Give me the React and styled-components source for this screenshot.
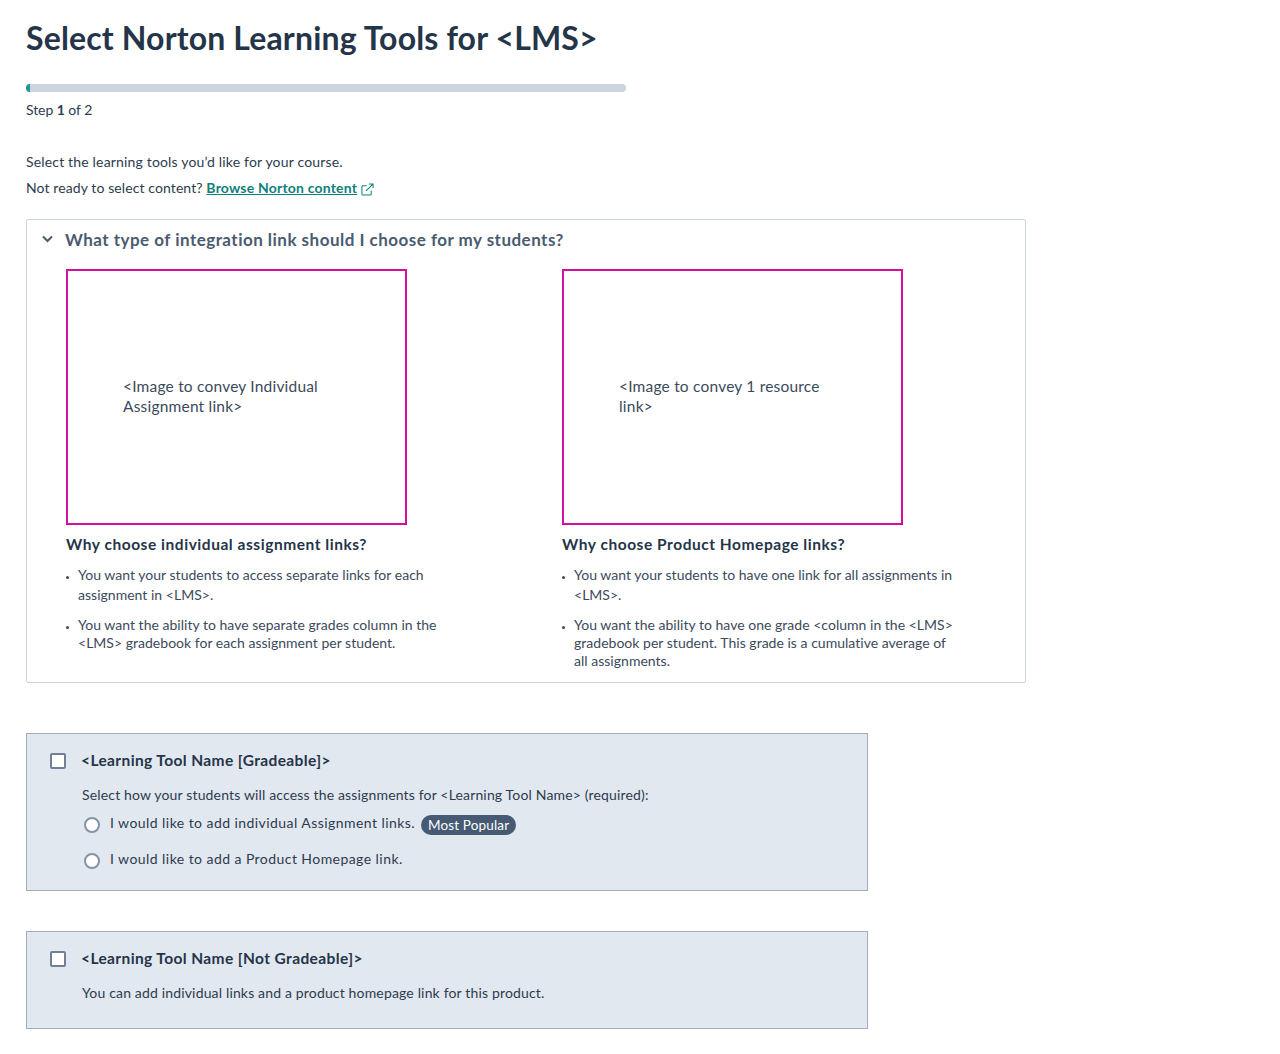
import React from 'react';
import styled, { createGlobalStyle } from 'styled-components';

const GlobalStyle = createGlobalStyle`
  body {
    margin: 0;
    background: #fff;
    color: #2c3e50;
    font-family: Lato, "Open Sans", sans-serif;
  }
`;

const Page = styled.main`
  padding: 18px 26px 25px;
  width: 1000px;
`;

const Title = styled.h1`
  margin: 0;
  font-size: 32px;
  line-height: 40px;
  font-weight: 700;
  color: #253549;
  letter-spacing: 0.15px;
`;

const Track = styled.div`
  margin-top: 26px;
  width: 600px;
  height: 8px;
  border-radius: 4px;
  background: #cbd5e0;
  overflow: hidden;
`;

const Fill = styled.div`
  height: 100%;
  background: #1d9a94;
`;

const Step = styled.p`
  margin: 8px 0 0;
  font-size: 14px;
  line-height: 20px;
  color: #2d3b4e;
  letter-spacing: -0.07px;

  strong {
    font-weight: 700;
  }
`;

const Intro = styled.p`
  margin: ${p => p.$top}px 0 0;
  font-size: 14px;
  line-height: 20px;
  color: #2d3b4e;
  letter-spacing: ${p => p.$tracking}px;
`;

const BrowseLink = styled.a`
  color: #0f7f7a;
  font-weight: 700;
  text-decoration: underline;
  letter-spacing: 0.2px;
`;

const ExternalIcon = styled.svg`
  width: 13px;
  height: 13px;
  margin-left: 4px;
  vertical-align: -3px;
  fill: none;
  stroke: #0f7f7a;
  stroke-width: 1.1;
`;

const Accordion = styled.section`
  margin-top: 21px;
  width: 1000px;
  height: 464px;
  box-sizing: border-box;
  border: 1px solid #cbd5e0;
  border-radius: 2px;
`;

const AccordionHead = styled.div`
  display: flex;
  align-items: center;
  height: 38px;
  padding: 0 0 0 15px;
  gap: 12px;
  font-size: 17px;
  font-weight: 700;
  color: #4a5b70;
  letter-spacing: 0.48px;
`;

const Chevron = styled.svg`
  width: 11px;
  height: 8px;
  fill: none;
  stroke: #4a5b70;
  stroke-width: 2;
`;

const Columns = styled.div`
  display: grid;
  grid-template-columns: 496px 1fr;
  padding: 11px 0 0 39px;
`;

const Placeholder = styled.div`
  box-sizing: border-box;
  width: 341px;
  height: 256px;
  border: 2px solid #d3109c;
  padding: 105px 70px 0 55px;
  font-size: 15.5px;
  line-height: 20px;
  color: #3c4a5c;
  letter-spacing: 0.2px;
`;

const ColumnTitle = styled.h3`
  margin: 9px 0 0;
  font-size: 15.5px;
  line-height: 20px;
  font-weight: 700;
  color: #253549;
  letter-spacing: 0.54px;
`;

const Bullets = styled.ul`
  margin: 11px 0 0;
  padding: 0 0 0 12px;
  width: 380px;
  font-size: 14px;
  color: #3c4a5c;
  letter-spacing: 0.02px;
`;

const Bullet = styled.li`
  margin-bottom: 11px;
  line-height: ${p => p.$line}px;

  &::marker {
    font-size: 8px;
  }
`;

const ToolCard = styled.section`
  margin-top: ${p => p.$top}px;
  width: 842px;
  height: ${p => p.$height}px;
  box-sizing: border-box;
  padding: 16px 23px 0;
  background: #e2e8f0;
  border: 1px solid #a0aec0;
`;

const ToolHead = styled.div`
  display: flex;
  align-items: center;
  gap: 15px;
  height: 20px;
  font-size: 15.5px;
  font-weight: 700;
  color: #253549;
  letter-spacing: 0.39px;
`;

const Checkbox = styled.span`
  box-sizing: border-box;
  width: 16px;
  height: 16px;
  margin-top: 2px;
  background: #fff;
  border: 2px solid #718096;
  border-radius: 2px;
`;

const ToolText = styled.p`
  margin: 15px 0 0 32px;
  font-size: 14px;
  line-height: 20px;
  color: #2d3b4e;
  letter-spacing: 0.16px;
`;

const RadioRow = styled.div`
  display: flex;
  align-items: flex-start;
  margin: ${p => p.$top}px 0 0 34px;
  font-size: 14px;
  line-height: 20px;
  color: #2d3b4e;
  letter-spacing: 0.44px;
`;

const Radio = styled.span`
  box-sizing: border-box;
  flex: none;
  width: 16px;
  height: 16px;
  margin: 4px 10px 0 0;
  background: #fff;
  border: 2px solid #8493a8;
  border-radius: 50%;
`;

const Badge = styled.span`
  display: inline-block;
  margin: 2px 0 0 6px;
  padding: 0 7px;
  height: 20px;
  line-height: 20px;
  border-radius: 10px;
  background: #465a74;
  color: #fff;
  font-size: 13.5px;
  letter-spacing: 0.15px;
`;

const links = [
  {
    image: '<Image to convey Individual Assignment link>',
    title: 'Why choose individual assignment links?',
    bullets: [
      { text: 'You want your students to access separate links for each assignment in <LMS>.', line: 20 },
      { text: 'You want the ability to have separate grades column in the <LMS> gradebook for each assignment per student.', line: 18 },
    ],
  },
  {
    image: '<Image to convey 1 resource link>',
    title: 'Why choose Product Homepage links?',
    bullets: [
      { text: 'You want your students to have one link for all assignments in <LMS>.', line: 20 },
      { text: 'You want the ability to have one grade <column in the <LMS> gradebook per student. This grade is a cumulative average of all assignments.', line: 18 },
    ],
  },
];

export default function App() {
  return (
    <Page>
      <GlobalStyle />
      <Title>Select Norton Learning Tools for &lt;LMS&gt;</Title>
      <Track>
        <Fill style={{ width: `${(1 / 150) * 100}%` }} />
      </Track>
      <Step>Step <strong>1</strong> of 2</Step>

      <Intro $top={32} $tracking={0.17}>Select the learning tools you’d like for your course.</Intro>
      <Intro $top={6} $tracking={0.1}>
        Not ready to select content? <BrowseLink href="#">Browse Norton content</BrowseLink>
        <ExternalIcon viewBox="0 0 14 14">
          <path d="M6 3H2a1 1 0 0 0-1 1v8a1 1 0 0 0 1 1h8a1 1 0 0 0 1-1V8" />
          <path d="M8.500 1h4.500v4.500M13 1 5.500 8.500" />
        </ExternalIcon>
      </Intro>

      <Accordion>
        <AccordionHead>
          <Chevron viewBox="0 0 11 8">
            <path d="M1 1.500 5.500 6 10 1.500" />
          </Chevron>
          What type of integration link should I choose for my students?
        </AccordionHead>
        <Columns>
          {links.map((link) => (
            <div key={link.title}>
              <Placeholder>{link.image}</Placeholder>
              <ColumnTitle>{link.title}</ColumnTitle>
              <Bullets>
                {link.bullets.map((bullet) => (
                  <Bullet key={bullet.text} $line={bullet.line}>{bullet.text}</Bullet>
                ))}
              </Bullets>
            </div>
          ))}
        </Columns>
      </Accordion>

      <ToolCard $top={50} $height={158}>
        <ToolHead>
          <Checkbox />
          &lt;Learning Tool Name [Gradeable]&gt;
        </ToolHead>
        <ToolText>Select how your students will access the assignments for &lt;Learning Tool Name&gt; (required):</ToolText>
        <RadioRow $top={8}>
          <Radio />
          I would like to add individual Assignment links.
          <Badge>Most Popular</Badge>
        </RadioRow>
        <RadioRow $top={14}>
          <Radio />
          I would like to add a Product Homepage link.
        </RadioRow>
      </ToolCard>

      <ToolCard $top={40} $height={98}>
        <ToolHead>
          <Checkbox />
          &lt;Learning Tool Name [Not Gradeable]&gt;
        </ToolHead>
        <ToolText>You can add individual links and a product homepage link for this product.</ToolText>
      </ToolCard>
    </Page>
  );
}
